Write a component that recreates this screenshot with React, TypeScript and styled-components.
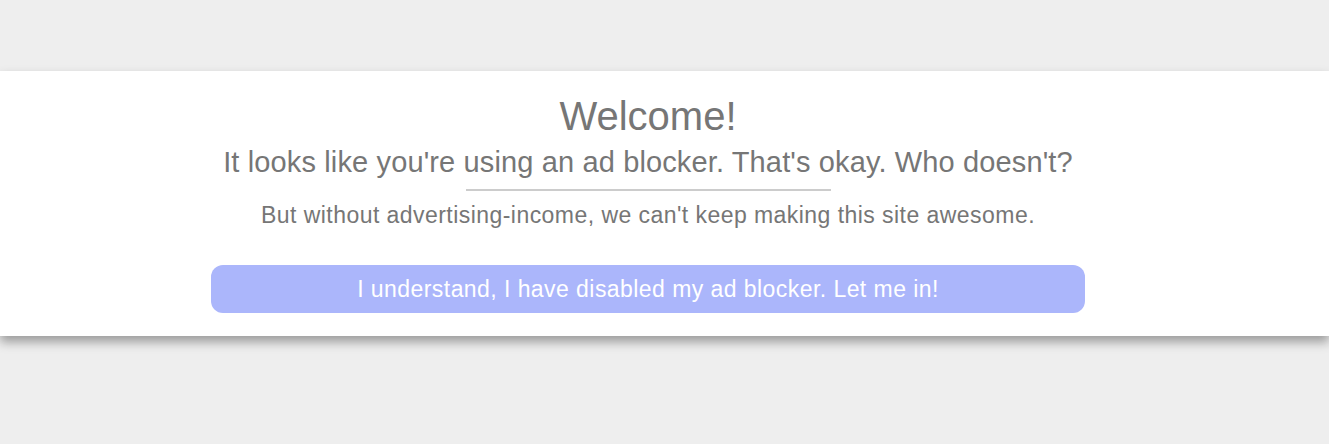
import React from "react";
import styled, { createGlobalStyle } from "styled-components";

const Global = createGlobalStyle`
  html, body { margin: 0; padding: 0; background: #eeeeee; }
  body { font-family: "Liberation Sans", Arial, sans-serif; }
`;

const Page = styled.div`
  width: 1329px;
  height: 444px;
  background: #eeeeee;
  padding-top: 71px;
  box-sizing: border-box;
`;

const Panel = styled.section`
  background: #ffffff;
  box-shadow: 0 6px 10px rgba(0, 0, 0, 0.35);
  height: 265px;
  box-sizing: border-box;
`;

const Content = styled.div`
  width: 1296px;
  display: flex;
  flex-direction: column;
  align-items: center;
  padding-top: 22px;
  color: #767676;
  text-align: center;
`;

const Title = styled.h1`
  margin: 0;
  font-size: 40px;
  font-weight: normal;
  line-height: 46px;
`;

const Subtitle = styled.h2`
  margin: 6px 0 0;
  font-size: 29px;
  font-weight: normal;
  letter-spacing: 0.13px;
  line-height: 34px;
`;

const Divider = styled.hr`
  width: 365px;
  height: 0;
  border: none;
  border-top: 2px solid #cccccc;
  margin: 10px 0 0;
`;

const Note = styled.p`
  margin: 11px 0 0;
  font-size: 23px;
  letter-spacing: 0.45px;
  line-height: 26px;
`;

const Button = styled.button`
  margin-top: 37px;
  width: 874px;
  height: 48px;
  padding: 0;
  border: none;
  border-radius: 12px;
  background: #abb6fb;
  color: #ffffff;
  font-family: inherit;
  font-size: 23px;
  letter-spacing: 0.44px;
  cursor: pointer;
`;

export default function App() {
  return (
    <Page>
      <Global />
      <Panel>
        <Content>
          <Title>Welcome!</Title>
          <Subtitle>It looks like you're using an ad blocker. That's okay. Who doesn't?</Subtitle>
          <Divider />
          <Note>But without advertising-income, we can't keep making this site awesome.</Note>
          <Button>I understand, I have disabled my ad blocker. Let me in!</Button>
        </Content>
      </Panel>
    </Page>
  );
}
